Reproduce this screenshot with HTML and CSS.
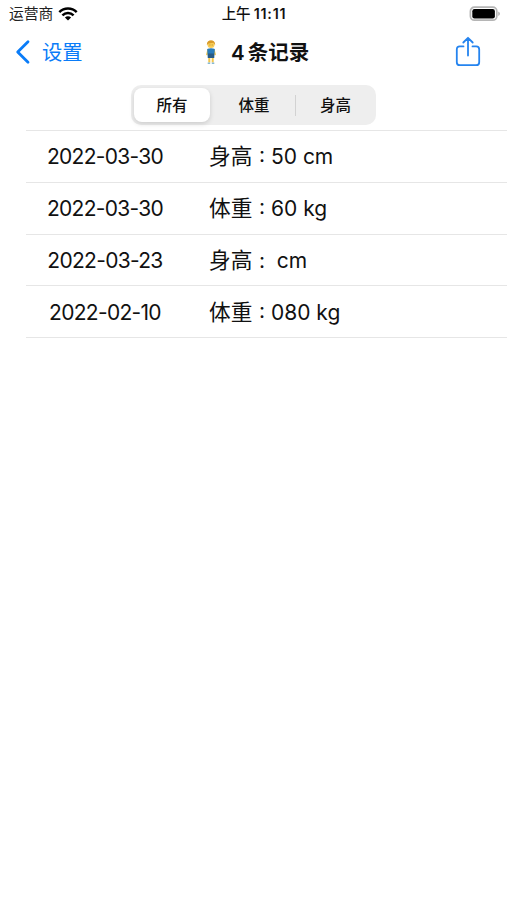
FILE: index.html
```html
<!DOCTYPE html>
<html lang="zh-CN">
<head>
<meta charset="utf-8">
<title>4条记录</title>
<link rel="stylesheet" href="styles.css">
</head>
<body>
<header class="status">
  <div class="carrier"><span>运营商</span>
    <svg class="wifi" width="20" height="14" viewBox="0 0 20 14" fill="none" stroke="#000" stroke-width="2.5"><path d="M1.3 5.1C6.2.4 13.8.4 18.7 5.1"/><path d="M4.4 8.3C7.6 5.3 12.4 5.3 15.6 8.3"/><path d="M10 13.4 6.9 10.4C8.7 8.8 11.3 8.8 13.1 10.4Z" fill="#000" stroke="none"/></svg>
  </div>
  <div class="clock"><span>上午</span><span class="time">11:11</span></div>
  <svg class="battery" width="32" height="16" viewBox="0 0 32 16"><rect x="1.4" y="1.2" width="26.4" height="13" rx="4" fill="#fff" stroke="#b5b5b5" stroke-width="1.7"/><rect x="3.3" y="3" width="22.6" height="9.4" rx="2.2"/><path d="M29.3 5.6c2.1.9 2.1 3.5 0 4.4Z" fill="#aaa"/></svg>
</header>
<nav class="nav">
  <a class="back"><svg width="16" height="26" viewBox="0 0 16 26" fill="none" stroke="#0a7cf8" stroke-width="2.8" stroke-linecap="round" stroke-linejoin="round"><path d="M13 2.7 2.7 13 13 23.3"/></svg><span>设置</span></a>
  <h1 class="title">
    <svg class="person" width="12" height="26" viewBox="0 0 12 26"><path d="M3.2 10.5 1.9 15.5M8.8 10.5 10.1 15.5" stroke="#f3c64b" stroke-width="1.6" stroke-linecap="round"/><path d="M4.3 18v5.5M7.7 18v5.5" stroke="#f3c64b" stroke-width="2"/><path d="M2.2 10Q6 8.6 9.8 10L9.2 19H2.8Z" fill="#277cbd"/><path d="M2.9 14.5h6.2V19H2.9Z" fill="#285b86"/><circle cx="6" cy="5.5" r="3.6" fill="#f8cc55"/><path d="M1.9 6C1.4-.2 10.6-.2 10.1 6L8.4 3.8 3.5 4.5Z" fill="#d99a28"/><path d="M4.6 6h.7M6.8 6h.7" stroke="#80601f" stroke-width=".8"/><path d="M2.7 24.2h2.5M6.8 24.2h2.5" stroke="#86b9d5" stroke-width="1.5"/></svg>
    <span class="count">4</span><span class="label">条记录</span>
  </h1>
  <svg class="share" width="26" height="32" viewBox="0 0 26 32" fill="none" stroke="#2584ef" stroke-width="1.8" stroke-linecap="round" stroke-linejoin="round"><path d="M8.5 10.4H4.8Q1.8 10.4 1.8 13.4V26.2Q1.8 29.2 4.8 29.2H21.2Q24.2 29.2 24.2 26.2V13.4Q24.2 10.4 21.2 10.4H17.5M13 19.5V2M8.3 6.5 13 1.8 17.7 6.5"/></svg>
</nav>
<div class="segments">
  <div class="segment active">所有</div>
  <div class="segment middle">体重</div>
  <div class="segment last">身高</div>
</div>
<ul class="records">
  <li><time>2022-03-30</time><span class="kind">身高</span><span class="value">: 50 cm</span></li>
  <li><time>2022-03-30</time><span class="kind">体重</span><span class="value">: 60 kg</span></li>
  <li><time>2022-03-23</time><span class="kind">身高</span><span class="value">: &nbsp;cm</span></li>
  <li><time>2022-02-10</time><span class="kind">体重</span><span class="value">: 080 kg</span></li>
</ul>
</body>
</html>
```
FILE: styles.css
```css
* { box-sizing: border-box; }
body { margin: 0; min-height: 900px; background: #fff; color: #111; font-family: Inter, "Noto Sans CJK SC", sans-serif; }
svg { display: block; flex: none; }
.status { height: 28px; display: grid; grid-template-columns: 1fr auto 1fr; align-items: center; padding: 0 6px 0 9px; }
.carrier { display: flex; align-items: center; gap: 5px; font-size: 14.8px; line-height: 28px; color: #222; }
.clock { display: flex; gap: 3px; margin-right: 2px; font-size: 14.5px; font-weight: 500; line-height: 28px; }
.time { font-size: 14.3px; font-weight: 600; letter-spacing: .8px; }
.battery { justify-self: end; }
.nav { height: 48px; display: grid; grid-template-columns: 190px auto 1fr; align-items: center; padding: 0 26px 0 15px; }
.back { display: flex; align-items: center; gap: 11px; color: #0a7cf8; font-size: 20.3px; line-height: 30px; }
.back span { padding-top: 2px; }
.title { display: flex; align-items: center; margin: 0; font-size: 20.5px; line-height: 30px; font-weight: 600; }
.count { margin-left: 14px; padding-top: 1px; }
.label { margin-left: 3px; padding-top: 2px; font-weight: 700; }
.share { justify-self: end; }
.segments { width: 245px; height: 40px; margin: 9px 0 0 131px; padding: 3px 0 3px 3px; display: grid; grid-template-columns: 76px 85px 1fr; border-radius: 10px; background: #eee; }
.segment { display: flex; align-items: center; justify-content: center; padding-bottom: 2px; font-size: 15.5px; font-weight: 500; }
.active { background: #fff; border-radius: 8px; box-shadow: 0 2px 5px rgba(0,0,0,.14); }
.middle { padding-left: 3px; }
.last { background: linear-gradient(#d2d2d2, #d2d2d2) left center / 1px 21px no-repeat; }
.records { list-style: none; margin: 5px 0 0 26px; padding: 0; border-top: 1px solid #e6e6e6; }
.records li { height: 51.75px; display: flex; align-items: center; border-bottom: 1px solid #e6e6e6; font-size: 21px; line-height: 32px; }
time { width: 158px; padding-top: 2px; text-align: center; letter-spacing: -.7px; }
.kind { width: 44px; margin-left: 25px; font-size: 21.7px; }
.value { margin-left: 6px; padding-top: 2px; white-space: pre; }
```
